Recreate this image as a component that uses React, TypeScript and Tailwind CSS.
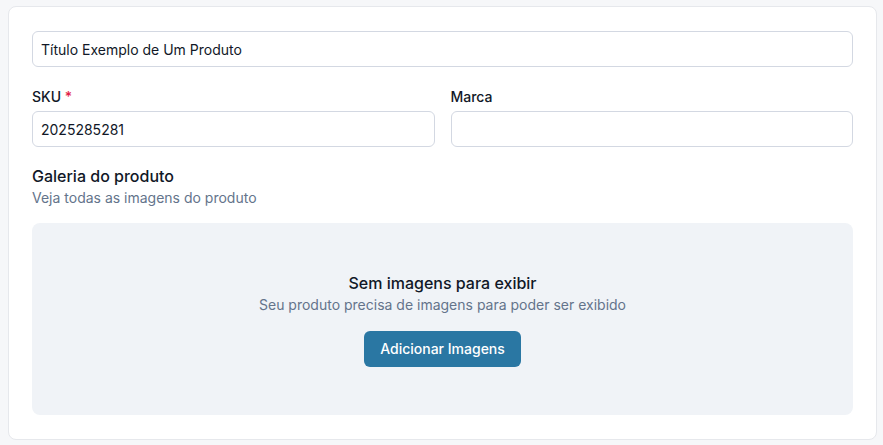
import React from "react";

export default function App() {
  const [title, setTitle] = React.useState("Título Exemplo de Um Produto");
  const [sku, setSku] = React.useState("2025285281");
  const [brand, setBrand] = React.useState("");

  const inputClass =
    "block w-full h-9 px-2 border border-[#d3d8e2] rounded-md bg-white text-sm text-[#111827] outline-none";

  return (
    <div className="min-h-screen bg-[#f6f7f9] pt-[6px] pl-2 font-['Inter',sans-serif]">
      <div className="w-[869px] bg-white border border-[#e6e8ec] rounded-lg px-[23px] pt-6 pb-6">
        <input value={title} onChange={(e) => setTitle(e.target.value)} className={inputClass} />

        <div className="grid grid-cols-2 gap-4 mt-5">
          <div>
            <label className="block text-sm font-medium leading-5 text-[#111827] mb-1">
              SKU <span className="text-[#e11d48]">*</span>
            </label>
            <input value={sku} onChange={(e) => setSku(e.target.value)} className={inputClass} />
          </div>
          <div>
            <label className="block text-sm font-medium leading-5 text-[#111827] mb-1">Marca</label>
            <input value={brand} onChange={(e) => setBrand(e.target.value)} className={inputClass} />
          </div>
        </div>

        <h3 className="mt-[17px] text-base font-medium leading-6 text-[#111827]">Galeria do produto</h3>
        <p className="text-sm leading-5 text-[#64748b]">Veja todas as imagens do produto</p>

        <div className="mt-[15px] h-[192px] rounded-lg bg-[#f0f3f7] flex flex-col items-center justify-center">
          <p className="text-base font-medium leading-6 text-[#111827]">Sem imagens para exibir</p>
          <p className="text-sm leading-5 text-[#64748b]">Seu produto precisa de imagens para poder ser exibido</p>
          <button
            type="button"
            className="mt-4 h-9 px-4 rounded-md bg-[#2a77a3] text-sm font-medium text-white"
          >
            Adicionar Imagens
          </button>
        </div>
      </div>
    </div>
  );
}
